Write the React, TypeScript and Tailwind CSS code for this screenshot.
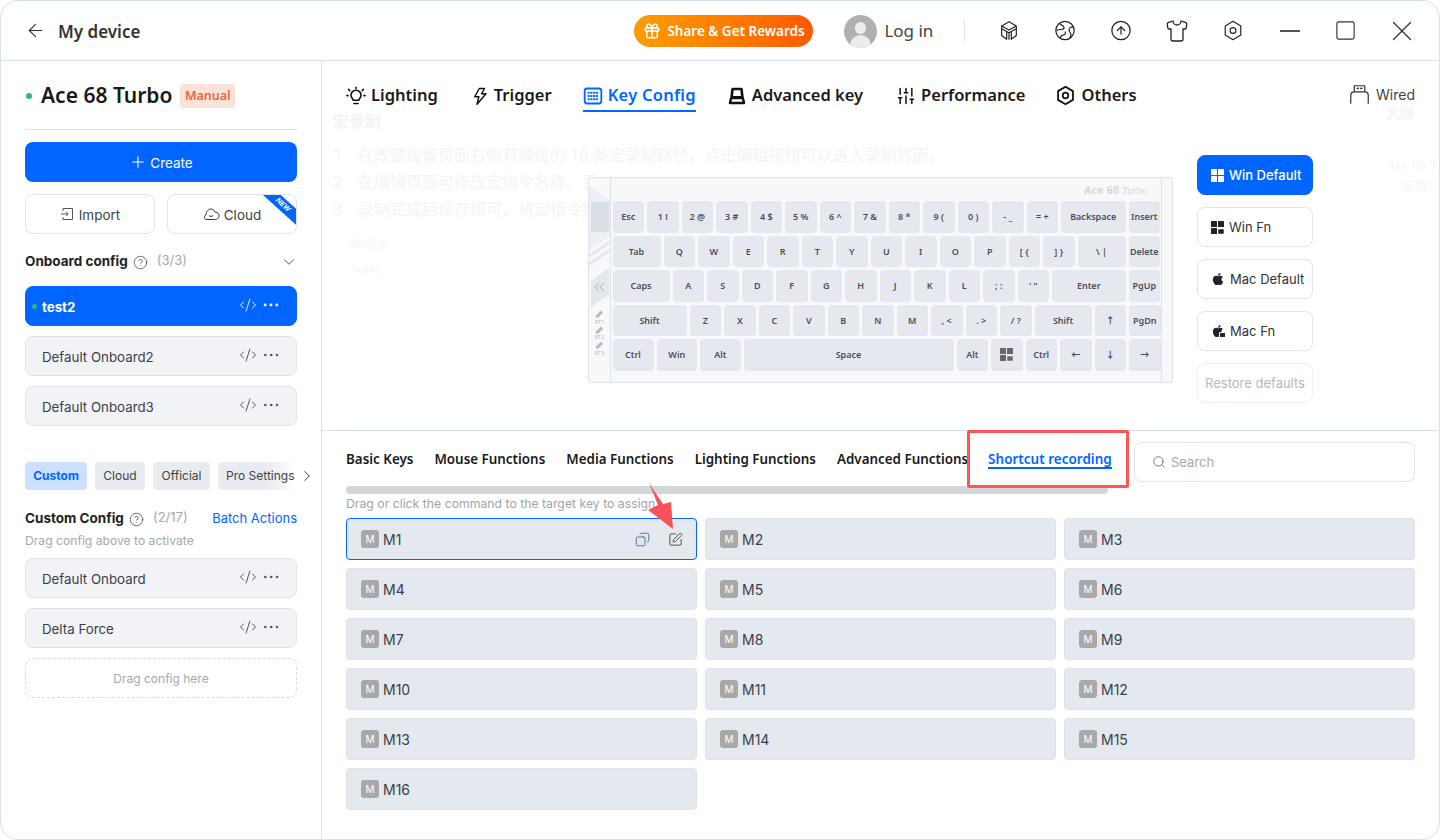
import React from "react";
import { ArrowLeft, Gift, CircleArrowUp, Shirt, Square, X, SlidersVertical, Plus, CircleHelp, ChevronDown, ChevronRight, CodeXml, Ellipsis, Search, Copy, SquarePen } from "lucide-react";
import { FaApple } from "react-icons/fa";

const sans = "font-['Noto_Sans','Noto_Sans_CJK_SC',sans-serif]";
const inter = "font-['Inter','Noto_Sans_CJK_SC',sans-serif]";

const Hex = ({ size = 22, sw = 1.5 }: { size?: number; sw?: number }) => (
  <svg width={size} height={size} viewBox="0 0 24 24" fill="none" stroke="currentColor" strokeWidth={sw} strokeLinejoin="round">
    <path d="M12 2 20.500 7v10L12 22 3.500 17V7z" />
    <circle cx="12" cy="12" r="3.200" />
  </svg>
);
const Box3D = () => (
  <svg width="22" height="22" viewBox="0 0 24 24" fill="none" stroke="#222" strokeWidth="1.300" strokeLinejoin="round">
    <path d="M12 2 4 6.500l8 4.500 8-4.500zM4 6.500v3l8 4.500 8-4.500v-3M4 9.500V17l5.500 4v-8M20 9.500V17l-5.500 4v-8M12 14v7.500" />
  </svg>
);
const Globe = () => (
  <svg width="23" height="23" viewBox="0 0 24 24" fill="none" stroke="#222" strokeWidth="1.300" strokeLinejoin="round">
    <circle cx="12" cy="12" r="10" />
    <path d="M6 4c1 3 5 2 5 5s-5 1-8 3M21 8c-3 0-5 1-4.500 4s2.500 2 2 5-2 4-2 4M7 21c0-3 1-4 3-4s3-2 2-4" />
  </svg>
);
const Bulb = () => (
  <svg width="20" height="20" viewBox="0 0 24 24" fill="none" stroke="#111" strokeWidth="1.900" strokeLinecap="round" strokeLinejoin="round">
    <path d="M8.500 17c0-2-2.500-3-2.500-6a6 6 0 0 1 12 0c0 3-2.500 4-2.500 6zM9.500 21h5M12 1.500v1.500M3 4l1.500 1.500M21 4l-1.500 1.500M1 11.500h1.500M21.500 11.500H23" />
  </svg>
);
const Bolt = () => (
  <svg width="18" height="20" viewBox="0 0 24 24" fill="none" stroke="#111" strokeWidth="1.900" strokeLinejoin="round">
    <path d="M11 2h7l-4 7h6L8 23l2.500-10H5z" />
  </svg>
);
const KeyIcon = () => (
  <svg width="20" height="20" viewBox="0 0 24 24" fill="none" stroke="#0066ff" strokeWidth="2.200">
    <rect x="2" y="3" width="20" height="18" rx="3" />
    <path d="M5.500 8h13M5.500 12h13M5.500 16h13" strokeDasharray="2.500 .8" strokeWidth="2.400" />
  </svg>
);
const AdvIcon = () => (
  <svg width="20" height="20" viewBox="0 0 24 24">
    <path d="M7 2h10a2 2 0 0 1 2 2l1 9 2 7a2 2 0 0 1-2 2H4a2 2 0 0 1-2-2l2-7 1-9a2 2 0 0 1 2-2z" fill="#111" />
    <path d="M8 5h8l.7 7H7.300zM6 16h12l.5 3h-13z" fill="#fff" />
  </svg>
);
const Usb = () => (
  <svg width="21" height="21" viewBox="0 0 24 24" fill="none" stroke="#333" strokeWidth="1.400" strokeLinecap="round" strokeLinejoin="round">
    <path d="M6 9V2h12v7M2 22v-9c0-2.500 1.500-4 4-4h12c2.500 0 4 1.500 4 4v9" />
    <path d="M9.500 5h1M13.500 5h1" strokeWidth="1.800" />
  </svg>
);
const Win = ({ fn = false, c = "#fff" }: { fn?: boolean; c?: string }) => (
  <svg width="13" height="13" viewBox="0 0 13 13" fill={c}>
    <rect x="0" y="0" width="6" height="6" rx="0.600" />
    <rect x="7" y="0" width="6" height="6" rx="0.600" />
    <rect x="0" y="7" width="6" height="6" rx="0.600" />
    {fn ? <rect x="7" y="8" width="6" height="5" rx="0.800" stroke="#fff" strokeWidth="0.500" /> : <rect x="7" y="7" width="6" height="6" rx="0.600" />}
  </svg>
);
const ImportIcon = () => (
  <svg width="14" height="14" viewBox="0 0 14 14" fill="none" stroke="#555" strokeWidth="1">
    <path d="M3 4V1.500h9.500v11H3V10M1 7h7M6 4.800 8.200 7 6 9.200" />
  </svg>
);
const CloudIcon = () => (
  <svg width="17" height="15" viewBox="0 0 17 15" fill="none" stroke="#333" strokeWidth="1">
    <path d="M4 12.500C1 12.500.5 9 3 8c0-3.500 2.500-6 5-6s3.500 2 4 3c3 0 4.500 2.500 4 4.500s-2 3-3.500 3z" />
    <path d="M6 8.500c1 1.200 3 1.200 4 0" />
  </svg>
);

const Item = ({ name, active = false }: { name: string; active?: boolean }) => (
  <div className={`relative h-10 rounded-lg border flex items-center pl-[16px] pr-[15px] ${inter} ${active ? "bg-[#0066ff] border-[#0066ff] text-white font-bold" : "bg-[#f1f3f7] border-[#dfe4ea] text-[#3a3f46]"} text-[13.300px]`}>
    {active && <span className="absolute left-[6px] top-[17px] w-[5px] h-[5px] rounded-full bg-[#2fb574]" />}
    <span className="flex-1 pt-[3px]">{name}</span>
    <CodeXml size={18} strokeWidth={1.200} className={`mr-[4px] -mt-[2px] ${active ? "text-white" : "text-[#444]"}`} />
    <Ellipsis size={20} strokeWidth={active ? 1.500 : 1.200} className={`-mt-[2px] ${active ? "text-white" : "text-[#444]"}`} />
  </div>
);

const TopTab = ({ icon, label, active = false, className = "" }: { icon: React.ReactNode; label: string; active?: boolean; className?: string }) => (
  <div className={`h-[33px] flex items-center gap-[5px] border-b-2 pt-[2px] ${className} ${active ? "border-[#0066ff] text-[#0066ff]" : "border-transparent text-[#1a1a1a]"}`}>
    {icon}
    <span className={`text-[16.500px] font-semibold leading-none ${active ? "tracking-[0.250px]" : ""}`}>{label}</span>
  </div>
);

const OsBtn = ({ icon, label, kind = "idle" }: { icon?: React.ReactNode; label: string; kind?: "on" | "idle" | "off" }) => (
  <div className={`h-10 w-[116px] rounded-lg border flex items-center ${inter} text-[13px] ${icon ? "pl-[13px] gap-[5px]" : "justify-center"} ${kind === "on" ? "bg-[#0066ff] border-[#0066ff] text-white font-medium" : kind === "off" ? "bg-white border-[#eef0f3] text-[#b5b8bd]" : "bg-white border-[#dfe4ea] text-[#333]"}`}>
    {icon}
    <span className="pt-[2px]">{label}</span>
  </div>
);

type K = [React.ReactNode, number];
const s = 31.500;
const rows: K[][] = [
  [["Esc", s], ["1 !", s], ["2 @", s], ["3 #", s], ["4 $", s], ["5 %", s], ["6 ^", s], ["7 &", s], ["8 *", s], ["9 (", s], ["0 )", s], ["- _", s], ["= +", s], ["Backspace", 64.500], ["Insert", s]],
  [["Tab", 48], ["Q", s], ["W", s], ["E", s], ["R", s], ["T", s], ["Y", s], ["U", s], ["I", s], ["O", s], ["P", s], ["[ {", s], ["] }", s], ["\\ |", 48], ["Delete", s]],
  [["Caps", 57], ["A", s], ["S", s], ["D", s], ["F", s], ["G", s], ["H", s], ["J", s], ["K", s], ["L", s], ["; :", s], ["' \"", s], ["Enter", 73.500], ["PgUp", s]],
  [["Shift", 74], ["Z", s], ["X", s], ["C", s], ["V", s], ["B", s], ["N", s], ["M", s], [", <", s], [". >", s], ["/ ?", s], ["Shift", 57], ["↑", s], ["PgDn", s]],
  [["Ctrl", 41], ["Win", 40.500], ["Alt", 40.500], ["Space", 210], ["Alt", s], [<Win fn c="#666" />, s], ["Ctrl", s], ["←", s], ["↓", s], ["→", s]],
];

const Keyboard = () => (
  <div className="relative w-[585px] h-[206px] mt-[65px] border border-[#dde3ea] rounded-[2px] bg-[#f7f8fa] flex">
    <div className="w-[22px] border-r border-[#dde3ea] flex flex-col items-center">
      <svg width="21" height="140" viewBox="0 0 21 140" className="shrink-0">
        <path d="M0 8 21 22v36L0 72z" fill="#eceff3" />
        <rect x="2" y="24" width="18" height="30" rx="1" fill="#d9dee5" />
        <path d="M0 78 21 64M0 86 21 72" stroke="#e4e8ed" strokeWidth="3" />
        <path d="M2 103 20 90v27L2 129z" fill="#e4e8ee" />
        <path d="M10 105 6 109l4 4M15 105l-4 4 4 4" fill="none" stroke="#c5cad1" strokeWidth="1.500" />
      </svg>
      <div className="flex flex-col items-center -mt-[5px] text-[5.500px] leading-[8px] text-[#b5bac1]">
        <span className="w-[8px] h-[2.500px] bg-[#b5bac1] -rotate-45 mb-[2px]" /><span className="mb-[3px]">RT1</span>
        <span className="w-[8px] h-[2.500px] bg-[#b5bac1] -rotate-45 mb-[2px]" /><span className="mb-[3px]">RT2</span>
        <span className="w-[8px] h-[2.500px] bg-[#b5bac1] -rotate-45 mb-[2px]" /><span>RT3</span>
      </div>
    </div>
    <div className="flex-1 pl-[1.500px] pt-[23px] flex flex-col gap-[3px]">
      {rows.map((r, i) => (
        <div key={i} className="flex gap-[3px] h-[31.500px]">
          {r.map((k, j) => (
            <div key={j} style={{ width: k[1] }} className={`shrink-0 rounded-[4px] bg-[#e5e9ef] flex items-center justify-center text-[9px] font-semibold text-[#4a4f57] ${sans}`}>{k[0]}</div>
          ))}
        </div>
      ))}
    </div>
    <div className="w-[11px] border-l border-[#dde3ea]" />
    <div className={`absolute right-[25px] top-[4px] text-[11px] font-bold text-[#d6d9de] ${sans}`}>Ace 68 <i className="font-['Liberation_Serif',serif] font-normal tracking-tight">Turbo</i></div>
  </div>
);

const Ghost = () => (
  <div className={`absolute inset-0 text-[#f3f4f5] ${sans} pointer-events-none`}>
    <div className="absolute left-[11px] top-[50px]">
      <div className="text-[16px] font-bold leading-[20px]">宏录制</div>
      <div className="mt-[11px] text-[16px] leading-[27px] whitespace-nowrap">
        <div className="flex"><span className="w-[25px]">1</span>在改键设置页面右侧有预设的 16 条宏录制路径，点击编辑按钮可以进入录制界面。</div>
        <div className="flex"><span className="w-[25px]">2</span>在编辑页面可修改宏指令名称、更</div>
        <div className="flex"><span className="w-[25px]">3</span>录制完成后保存即可，将宏指令拖</div>
      </div>
    </div>
    <div className="absolute left-[26px] top-[176px] text-[10px] text-[#f8f8f9] font-bold">我的设备</div>
    <div className="absolute left-[29px] top-[201px] text-[10px] text-[#f8f8f9] font-bold">Ace60</div>
    <div className="absolute left-[1064px] top-[41px] text-[14px] text-[#f5f5f6] font-bold">大纲</div>
    <div className="absolute left-[1064px] top-[94px] text-[14px] text-[#f6f6f7] font-['Liberation_Serif',serif] whitespace-nowrap">Ace 68 T</div>
    <div className="absolute left-[1079px] top-[114px] text-[14px] text-[#f6f6f7] whitespace-nowrap">友售</div>
  </div>
);

const cats = ["Basic Keys", "Mouse Functions", "Media Functions", "Lighting Functions", "Advanced Functions"];

const Macro = ({ n, active = false }: { n: number; active?: boolean }) => (
  <div className={`h-[42px] rounded-[4px] border bg-[#e4e8ef] flex items-center pl-[14px] pr-[13px] ${inter} ${active ? "border-[#0066ff]" : "border-[#dde2e9]"}`}>
    <span className="w-[18px] h-[18px] rounded-[3px] bg-[#a8a8a8] text-white text-[10px] flex items-center justify-center">M</span>
    <span className="ml-[4px] flex-1 text-[14px] text-[#3c4048]">M{n}</span>
    {active && <Copy size={15} strokeWidth={1.300} className="text-[#2f5f9e] mr-[18px] -scale-x-100" />}
    {active && <SquarePen size={15} strokeWidth={1.300} className="text-[#333]" />}
  </div>
);

export default function App() {
  return (
    <div className={`w-[1440px] h-[840px] overflow-hidden bg-white border border-[#d8e0e8] rounded-[18px] flex flex-col ${sans}`}>
      <header className="h-[60px] shrink-0 border-b border-[#d8e0e8] flex items-center pl-[24px]">
        <ArrowLeft size={21} strokeWidth={1.300} className="text-[#333]" />
        <span className="ml-[12px] pt-[2px] text-[17px] font-semibold text-[#333]">My device</span>
        <div className="ml-[494px] mt-[1px] w-[179px] h-[32px] rounded-full bg-gradient-to-r from-[#ff9c00] to-[#ff5a00] flex items-center pl-[9px] gap-[6px] text-white text-[13.500px] font-semibold whitespace-nowrap">
          <Gift size={18} strokeWidth={2} />
          <span>Share &amp; Get Rewards</span>
        </div>
        <div className="ml-[31px] mt-[1px] w-[33px] h-[33px] rounded-full bg-[#b0b0b0] overflow-hidden flex flex-col items-center">
          <span className="mt-[7px] w-[11px] h-[13px] rounded-full bg-[#ececec]" />
          <span className="mt-[1px] w-[21px] h-[14px] rounded-t-full bg-[#ececec]" />
        </div>
        <span className="ml-[7px] text-[17px] text-[#444]">Log in</span>
        <span className="ml-[31px] w-px h-[20px] bg-[#dcdfe3]" />
        <div className="ml-[33px] w-[22px] flex justify-center"><Box3D /></div>
        <div className="ml-[34px] w-[22px] flex justify-center"><Globe /></div>
        <div className="ml-[34px] w-[22px] flex justify-center"><CircleArrowUp size={23} strokeWidth={1.300} className="text-[#222]" /></div>
        <div className="ml-[34px] w-[22px] flex justify-center"><Shirt size={24} strokeWidth={1.300} className="text-[#222] shrink-0" /></div>
        <div className="ml-[34px] w-[22px] flex justify-center text-[#222]"><Hex size={23} sw={1.300} /></div>
        <span className="ml-[36px] w-[20px] h-[2px] bg-[#555]" />
        <Square size={23} strokeWidth={1.200} className="ml-[34px] text-[#333]" />
        <X size={34} strokeWidth={0.900} className="ml-[28px] text-[#333]" />
      </header>

      <div className="flex-1 flex min-h-0">
        <aside className="w-[321px] shrink-0 border-r border-[#d8e0e8] px-[24px] flex flex-col">
          <div className="h-[69px] shrink-0 flex items-center border-b border-[#d8e0e8] pt-[2px]">
            <span className="w-[6px] h-[6px] rounded-full bg-[#2fb574] ml-[1px]" />
            <span className="ml-[9px] text-[21px] font-semibold text-[#1a1a1a]">Ace 68 Turbo</span>
            <span className="ml-[8px] h-[24px] px-[4.500px] rounded-[4px] bg-[#fbe2d9] text-[#e8683a] text-[12.500px] font-semibold flex items-center">Manual</span>
          </div>
          <div className={`mt-[12px] h-10 rounded-lg bg-[#0066ff] text-white flex items-center justify-center gap-[3px] text-[13.500px] ${inter}`}>
            <Plus size={18} strokeWidth={1.400} /> <span className="pt-[2px]">Create</span>
          </div>
          <div className={`mt-[12px] flex gap-[12px] text-[13.500px] text-[#444] ${inter}`}>
            <div className="w-[130px] h-10 rounded-lg border border-[#dfe4ea] flex items-center justify-center gap-[5px]"><ImportIcon /> <span className="pt-[2px]">Import</span></div>
            <div className="relative w-[130px] h-10 rounded-lg border border-[#dfe4ea] flex items-center justify-center gap-[4px] overflow-hidden"><CloudIcon /> <span className="pt-[2px]">Cloud</span>
              <div className="absolute -right-[22px] top-[4px] w-[70px] h-[12px] bg-[#0066ff] rotate-[42deg] text-white text-[7px] font-bold flex items-center justify-center italic">NEW</div>
            </div>
          </div>
          <div className={`mt-[18px] h-[20px] flex items-center text-[13px] ${inter}`}>
            <span className="font-bold text-[13.500px] text-[#222] -mt-[2px]">Onboard config</span>
            <CircleHelp size={15} strokeWidth={1.200} className="ml-[5px] text-[#444]" />
            <span className="ml-[9px] text-[#a5a8ad] -mt-[2px]">(3/3)</span>
            <ChevronDown size={18} strokeWidth={1.200} className="ml-auto text-[#444] -mr-[1px]" />
          </div>
          <div className="mt-[14px] flex flex-col gap-[10px]">
            <Item name="test2" active />
            <Item name="Default Onboard2" />
            <Item name="Default Onboard3" />
          </div>
          <div className={`mt-[36px] relative flex gap-[8px] h-[28px] text-[12px] ${inter}`}>
            <span className="w-[62px] rounded-[4px] bg-[#cce0ff] text-[#0066ff] font-bold flex items-center justify-center">Custom</span>
            <span className="w-[50px] rounded-[4px] bg-[#e8ebf0] text-[#444] flex items-center justify-center">Cloud</span>
            <span className="w-[57px] rounded-[4px] bg-[#e8ebf0] text-[#444] flex items-center justify-center">Official</span>
            <span className="w-[79px] rounded-l-[4px] bg-gradient-to-r from-[#e8ebf0] from-60% to-white text-[#444] flex items-center pl-[8px] whitespace-nowrap">Pro Settings</span>
            <ChevronRight size={18} strokeWidth={1.300} className="absolute -right-[19px] top-[5px] text-[#333]" />
          </div>
          <div className={`mt-[19px] h-[20px] flex items-center text-[13px] ${inter}`}>
            <span className="font-bold text-[13.500px] text-[#222] -mt-[2px]">Custom Config</span>
            <CircleHelp size={15} strokeWidth={1.200} className="ml-[5px] text-[#444]" />
            <span className="ml-[9px] text-[#a5a8ad] -mt-[2px]">(2/17)</span>
            <span className="ml-auto text-[#0066ff]">Batch Actions</span>
          </div>
          <div className={`mt-[4px] h-[16px] text-[12.150px] text-[#a5a8ad] leading-[16px] ${inter}`}>Drag config above to activate</div>
          <div className="mt-[9px] flex flex-col gap-[10px]">
            <Item name="Default Onboard" />
            <Item name="Delta Force" />
            <div className={`h-10 rounded-lg border border-dashed border-[#d8dce1] flex items-center justify-center text-[12px] text-[#a5a8ad] ${inter}`}><span className="pt-[2px]">Drag config here</span></div>
          </div>
        </aside>

        <main className="flex-1 min-w-0 flex flex-col">
          <section className="relative h-[370px] shrink-0 border-b border-[#d8e0e8] pt-[18px] px-[24px]">
            <Ghost />
            <div className="relative flex items-center">
              <div className="flex">
                <TopTab icon={<Bulb />} label="Lighting" />
                <TopTab className="ml-[33px]" icon={<Bolt />} label="Trigger" />
                <TopTab className="ml-[31px]" icon={<KeyIcon />} label="Key Config" active />
                <TopTab className="ml-[31px]" icon={<AdvIcon />} label="Advanced key" />
                <TopTab className="ml-[33px]" icon={<SlidersVertical size={20} strokeWidth={1.800} className="text-[#111]" />} label="Performance" />
                <TopTab className="ml-[30px]" icon={<span className="text-[#111]"><Hex size={21} sw={2} /></span>} label="Others" />
              </div>
              <div className={`ml-auto flex items-center gap-[6px] text-[14px] text-[#444] -mt-[2px] ${inter}`}><Usb /> Wired</div>
            </div>
            <div className="relative flex justify-end gap-[24px] pr-[102px]">
              <Keyboard />
              <div className="mt-[43px] flex flex-col gap-[12px]">
                <OsBtn icon={<Win />} label="Win Default" kind="on" />
                <OsBtn icon={<Win fn c="#222" />} label="Win Fn" />
                <OsBtn icon={<FaApple size={14} className="text-[#222]" />} label="Mac Default" />
                <OsBtn icon={<span className="relative"><FaApple size={14} className="text-[#222]" /><span className="absolute -right-[1px] bottom-0 w-[7px] h-[6px] rounded-[1px] bg-[#222] border border-white" /></span>} label="Mac Fn" />
                <OsBtn label="Restore defaults" kind="off" />
              </div>
            </div>
          </section>

          <section className="relative flex-1 min-h-0 px-[24px]">
            <div className="flex h-[55px]">
              <div className="flex items-start pt-[20px] gap-[21px] text-[13.400px] font-semibold text-[#1a1a1a] whitespace-nowrap">
                {cats.map((c) => <span key={c} className="leading-[16px]">{c}</span>)}
                <span className="-ml-[1px] text-[13.500px] text-[#0066ff] border-b-2 border-[#0066ff] leading-[16px]">Shortcut recording</span>
              </div>
              <div className={`absolute left-[812px] top-[11px] w-[281px] h-10 rounded-lg border border-[#dfe4ea] bg-white flex items-center pl-[17px] gap-[5px] text-[13px] text-[#a5a8ad] ${inter}`}>
                <Search size={14} strokeWidth={1.300} className="text-[#555]" /> <span className="pt-[2px]">Search</span>
              </div>
            </div>
            <div className="absolute left-[645px] -top-[1px] w-[162px] h-[58px] border-[3px] border-[#f55] rounded-[2px] pointer-events-none" />
            <div className="w-[762px] h-[8px] rounded-full bg-[#d2d6d9]" />
            <div className={`mt-[2px] h-[16px] leading-[16px] text-[12.250px] text-[#9fa3a8] ${inter}`}>Drag or click the command to the target key to assign</div>
            <div className="mt-[6px] grid grid-cols-3 gap-x-[8px] gap-y-[8px]">
              {Array.from({ length: 16 }, (_, i) => <Macro key={i} n={i + 1} active={i === 0} />)}
            </div>
            <svg width="40" height="52" viewBox="0 0 40 52" className="absolute left-[318px] top-[49px] pointer-events-none">
              <path d="M9 3 23 24l8-2 2 27L8 30l10-5z" fill="#f5525a" />
            </svg>
          </section>
        </main>
      </div>
    </div>
  );
}
